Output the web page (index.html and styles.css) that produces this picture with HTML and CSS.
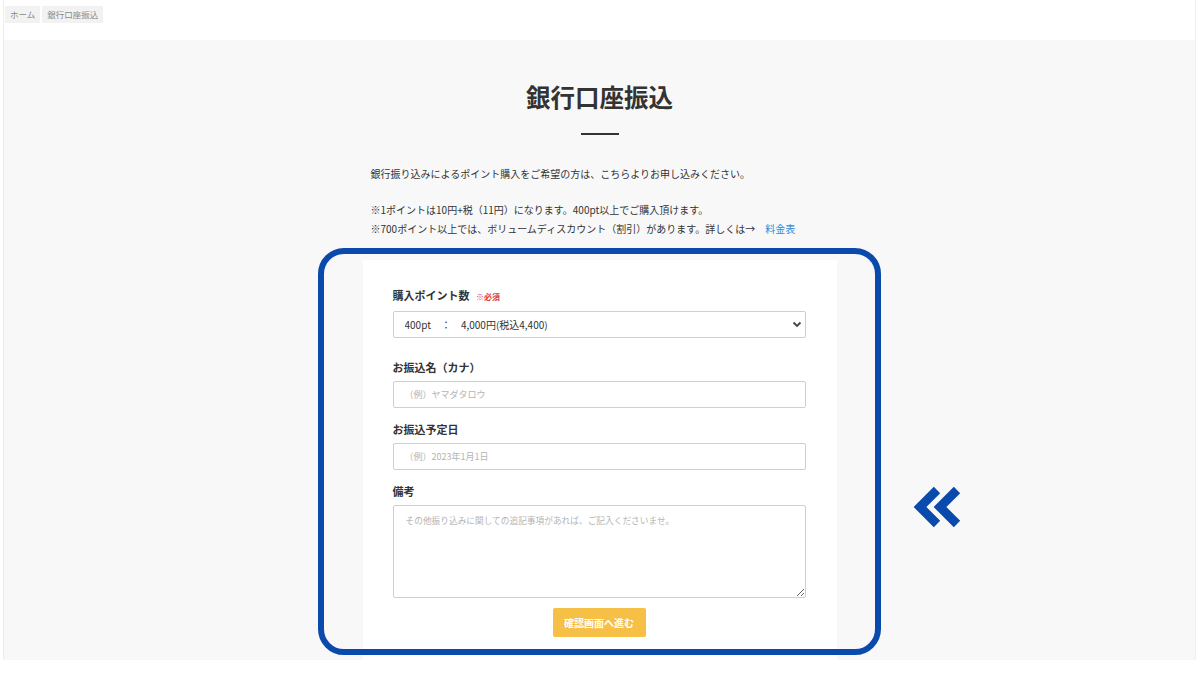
FILE: index.html
```html
<!DOCTYPE html>
<html lang="ja">
<head>
    <meta charset="UTF-8">
    <meta name="viewport" content="width=device-width, initial-scale=1.0">
    <title>銀行口座振込</title>
    <link rel="stylesheet" href="styles.css">
</head>
<body>
    <div class="page">
        <div class="breadcrumb">
            <span class="crumb">ホーム</span>
            <span class="crumb">銀行口座振込</span>
        </div>

        <div class="section">
            <h1>銀行口座振込</h1>
            <div class="title-line"></div>

            <div class="content">
                <p class="lead">銀行振り込みによるポイント購入をご希望の方は、こちらよりお申し込みください。</p>
                <p class="note">※1ポイントは10円+税（11円）になります。400pt以上でご購入頂けます。<br>※700ポイント以上では、ボリュームディスカウント（割引）があります。詳しくは→　<a href="#" class="price-link">料金表</a></p>

                <div class="form-card">
                    <!-- 注目枠 -->
                    <div class="highlight"></div>
                    <svg class="arrows" width="48" height="44" viewBox="0 0 48 44">
                        <polyline points="24,5 7,22 24,39" fill="none" stroke="#0b4aad" stroke-width="9" stroke-linejoin="miter"/>
                        <polyline points="44,5 27,22 44,39" fill="none" stroke="#0b4aad" stroke-width="9" stroke-linejoin="miter"/>
                    </svg>

                    <div class="field field-points">
                        <label>購入ポイント数 <span class="required">※必須</span></label>
                        <div class="select-wrap">
                            <select>
                                <option>400pt　：　4,000円(税込4,400)</option>
                            </select>
                            <svg class="select-arrow" width="10" height="7" viewBox="0 0 10 7">
                                <polyline points="1.5,1.5 5,5 8.5,1.5" fill="none" stroke="#444" stroke-width="1.8"/>
                            </svg>
                        </div>
                    </div>

                    <div class="field">
                        <label>お振込名（カナ）</label>
                        <input type="text" placeholder="（例）ヤマダタロウ">
                    </div>

                    <div class="field">
                        <label>お振込予定日</label>
                        <input type="text" placeholder="（例）2023年1月1日">
                    </div>

                    <div class="field field-note">
                        <label>備考</label>
                        <textarea placeholder="その他振り込みに関しての追記事項があれば、ご記入くださいませ。"></textarea>
                    </div>

                    <button class="confirm-btn">確認画面へ進む</button>
                </div>
            </div>
        </div>
    </div>
</body>
</html>
```

FILE: styles.css
```css
body {
    margin: 0;
    background-color: #fff;
    font-family: "Noto Sans CJK JP", "Noto Sans", sans-serif;
    color: #333;
}

.page {
    margin: 0 4px 0 3px;
    border-left: 1px solid #ececec;
    border-right: 1px solid #efefef;
    height: 660px;
}

.breadcrumb {
    height: 40px;
    display: flex;
    gap: 2px;
    padding-top: 6px;
    box-sizing: border-box;
    padding-left: 1px;
}

.crumb {
    background-color: #f2f2f2;
    color: #888;
    font-size: 8.5px;
    line-height: 17px;
    height: 17px;
    padding: 0 5px;
}

.section {
    background-color: #f8f8f8;
    height: 620px;
    padding-top: 39px;
    box-sizing: border-box;
}

h1 {
    margin: 0;
    text-align: center;
    font-size: 24.5px;
    line-height: 36px;
    font-weight: bold;
    color: #333;
}

.title-line {
    width: 38px;
    height: 2px;
    background-color: #333;
    margin: 18px auto 0;
}

.content {
    width: 474px;
    margin: 0 auto;
}

.content p {
    margin: 0;
    padding: 0 8px;
    font-size: 10px;
    line-height: 19px;
    color: #333;
}

.lead {
    padding-top: 29px !important;
}

.note {
    margin-top: 17px !important;
}

.price-link {
    color: #2b8ad6;
    text-decoration: none;
}

.form-card {
    position: relative;
    background-color: #fff;
    margin-top: 22px;
    padding: 28px 31px 23px 30px;
    display: flex;
    flex-direction: column;
}

.highlight {
    position: absolute;
    top: -12px;
    left: -45px;
    right: -44px;
    bottom: 5px;
    border: 6px solid #0b4aad;
    border-radius: 26px;
    pointer-events: none;
}

.arrows {
    position: absolute;
    left: 550px;
    top: 225px;
}

.field {
    display: flex;
    flex-direction: column;
    margin-bottom: 14px;
}

.field-points {
    margin-bottom: 22px;
}

.field-note {
    margin-bottom: 10px;
}

.field label {
    font-size: 11px;
    line-height: 14px;
    font-weight: bold;
    color: #333;
    margin-bottom: 7px;
}

.required {
    color: #e0363b;
    font-size: 8px;
    margin-left: 4px;
}

.select-wrap {
    position: relative;
}

.field select,
.field input,
.field textarea {
    display: block;
    width: 100%;
    box-sizing: border-box;
    border: 1px solid #cfcfcf;
    border-radius: 2px;
    background-color: #fff;
    font-family: inherit;
    color: #333;
    outline: none;
}

.field select {
    -webkit-appearance: none;
    appearance: none;
    height: 27px;
    padding: 0 11px;
    font-size: 10px;
}

.select-arrow {
    position: absolute;
    right: 4px;
    top: 10px;
}

.field input {
    height: 27px;
    padding: 0 11px;
    font-size: 9px;
}

.field textarea {
    height: 93px;
    padding: 8px 12px;
    font-size: 8.7px;
    resize: vertical;
}

.field input::placeholder,
.field textarea::placeholder {
    color: #b4b4b4;
}

.confirm-btn {
    align-self: center;
    width: 93px;
    height: 29px;
    border: none;
    border-radius: 2px;
    background-color: #f6bf45;
    color: #fff;
    font-family: inherit;
    font-size: 10px;
    font-weight: bold;
    cursor: pointer;
}
```
